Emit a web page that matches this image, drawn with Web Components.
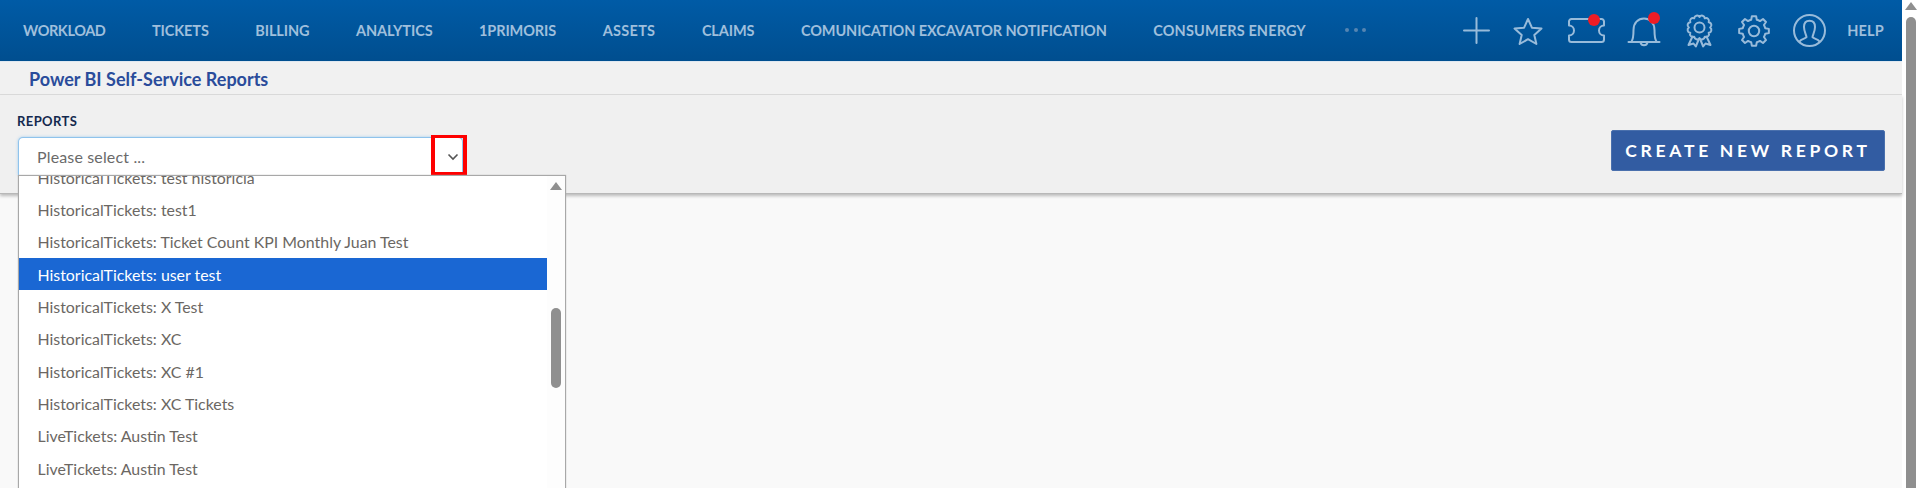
<!DOCTYPE html>
<html lang="en"><head><meta charset="utf-8"><title>Power BI Self-Service Reports</title>
<style>html,body{margin:0;height:488px;overflow:hidden;background:#f9f9f9;font-family:Lato,"Liberation Sans",sans-serif}</style>
</head><body>
<app-shell>
  <top-nav>
    <nav-item style="letter-spacing:-.4px">WORKLOAD</nav-item><nav-item>TICKETS</nav-item><nav-item>BILLING</nav-item><nav-item>ANALYTICS</nav-item><nav-item>1PRIMORIS</nav-item><nav-item style="letter-spacing:.3px">ASSETS</nav-item><nav-item>CLAIMS</nav-item><nav-item>COMUNICATION EXCAVATOR NOTIFICATION</nav-item><nav-item style="letter-spacing:.13px">CONSUMERS ENERGY</nav-item>
    <nav-icon slot="icons" name="plus" style="margin-left:0"></nav-icon>
    <nav-icon slot="icons" name="star" style="margin-left:24px"></nav-icon>
    <nav-icon slot="icons" name="ticket" dot style="margin-left:25px"></nav-icon>
    <nav-icon slot="icons" name="bell" dot style="margin-left:23px"></nav-icon>
    <nav-icon slot="icons" name="award" style="margin-left:27px"></nav-icon>
    <nav-icon slot="icons" name="gear" style="margin-left:26px"></nav-icon>
    <nav-icon slot="icons" name="user" style="margin-left:23px"></nav-icon>
    <nav-item slot="icons" style="margin-left:21px;letter-spacing:.2px">HELP</nav-item>
  </top-nav>
  <page-title>Power BI Self-Service Reports</page-title>
  <report-filter>
    <report-select label="REPORTS" placeholder="Please select ...">
      <list-option>HistoricalTickets: test historicia</list-option>
      <list-option>HistoricalTickets: test1</list-option>
      <list-option>HistoricalTickets: Ticket Count KPI Monthly Juan Test</list-option>
      <list-option selected>HistoricalTickets: user test</list-option>
      <list-option>HistoricalTickets: X Test</list-option>
      <list-option>HistoricalTickets: XC</list-option>
      <list-option>HistoricalTickets: XC #1</list-option>
      <list-option>HistoricalTickets: XC Tickets</list-option>
      <list-option>LiveTickets: Austin Test</list-option>
      <list-option>LiveTickets: Austin Test</list-option>
    </report-select>
    <primary-button slot="action">CREATE NEW REPORT</primary-button>
  </report-filter>
</app-shell>
<script>
function el(name, css, html){
  customElements.define(name, class extends HTMLElement{
    constructor(){super();this.attachShadow({mode:'open'}).innerHTML='<style>'+css+'</style>'+html;}
  });
}
function radial(n,r1,r2,c){
  let d='';
  for(let i=0;i<n;i++){
    const a=i/n*Math.PI*2, s=Math.PI/n;
    const p=(r,t)=>(c+r*Math.sin(t)).toFixed(2)+' '+(c-r*Math.cos(t)).toFixed(2);
    d+=(i?'L':'M')+p(r1,a-s*.62)+'L'+p(r2,a-s*.36)+'L'+p(r2,a+s*.36)+'L'+p(r1,a+s*.62)+'A'+r1+' '+r1+' 0 0 1 '+p(r1,a+s*1.38);
  }
  return d+'Z';
}
function scallop(n,r,bump,cx,cy){
  let d='';
  for(let i=0;i<n;i++){
    const p=t=>(cx+r*Math.sin(t)).toFixed(2)+' '+(cy-r*Math.cos(t)).toFixed(2);
    const a=i/n*Math.PI*2, b=(i+1)/n*Math.PI*2;
    d+=(i?'':'M'+p(a))+'A'+bump+' '+bump+' 0 0 1 '+p(b);
  }
  return d+'Z';
}
const ICONS={
  plus:[25,25,'<path d="M0 12.5H25M12.5 0V25"/>'],
  star:[30,28,'<path d="M15 2 18.9 10.7 28.5 11.6 21.3 18 23.4 27 15 22.2 6.6 27 8.7 18 1.5 11.6 11.1 10.7Z"/>'],
  ticket:[37,25,'<path d="M1 3.5A2.5 2.5 0 0 1 3.5 1H33.5A2.5 2.5 0 0 1 36 3.5V7.5A5 5 0 0 0 36 17.5V21.5A2.5 2.5 0 0 1 33.5 24H3.5A2.5 2.5 0 0 1 1 21.5V17.5A5 5 0 0 0 1 7.5Z"/>'],
  bell:[32,30,'<path d="M3.5 25.5C5.5 23 5.5 19 5.5 14 5.5 7 10 2.5 16 2.5S26.5 7 26.5 14C26.5 19 26.5 23 28.5 25.5"/><path d="M.5 26H31.5"/><path d="M12.5 26.5A3.6 3.6 0 0 0 19.5 26.5"/>'],
  award:[25,32,'<path d="'+scallop(12,10.6,2.9,12.5,12.5)+'"/><circle cx="12.5" cy="12.5" r="5"/><path d="M5.5 21.5 1.5 30 6.5 28.5 8.8 31.5 11.5 25"/><path d="M19.5 21.5 23.5 30 18.5 28.5 16.2 31.5 13.5 25"/>'],
  gear:[32,32,'<path d="'+radial(8,11.6,15,16)+'"/><circle cx="16" cy="16" r="5.2"/>'],
  user:[33,33,'<circle cx="16.5" cy="16.5" r="15.5"/><path d="M6.5 27.5C8 25 12.5 24.5 13.5 23.2 13.5 21 11 18 11 13 11 9 13 6.8 16.5 6.8S22 9 22 13C22 18 19.5 21 19.5 23.2 20.5 24.5 25 25 26.5 27.5"/>']
};
el('app-shell',`
  :host{display:grid;grid-template-columns:1fr 18px;height:488px;overflow:hidden;font-family:Lato,"Liberation Sans",sans-serif}
  main{display:flex;flex-direction:column;min-width:0;background:#f9f9f9}
`,`<main><slot></slot></main><page-scrollbar></page-scrollbar>`);
el('page-scrollbar',`
  :host{display:flex;flex-direction:column;align-items:center;background:#fff;padding:2px 0 0 0}
  .up{width:0;height:0;border:6px solid transparent;border-top:0;border-bottom:8px solid #8f8f8f}
  .thumb{flex:1;width:10px;margin-top:7px;background:#8f8f8f;border-radius:5px 5px 0 0}
`,`<div class="up"></div><div class="thumb"></div>`);
el('top-nav',`
  :host{display:flex;align-items:center;justify-content:space-between;height:61px;padding:0 18px 0 23px;background:linear-gradient(#005ba6,#004e8f);border-bottom:1px solid #dfe8f1;flex:none}
  .l{display:flex;align-items:center;gap:46.5px}
  .r{display:flex;align-items:center}
  .dots{display:flex;gap:4.5px;margin-left:-7px;margin-top:-1px}
  .dots i{width:4px;height:4px;border-radius:50%;background:#5585b2}
`,`<div class="l"><slot></slot><div class="dots"><i></i><i></i><i></i></div></div><div class="r"><slot name="icons"></slot></div>`);
el('nav-item',`
  :host{display:block;font:700 14.5px/18px Lato,"Liberation Sans",sans-serif;color:#9fbfdc;white-space:nowrap;letter-spacing:-.1px}
`,`<slot></slot>`);
customElements.define('nav-icon',class extends HTMLElement{
  constructor(){super();this.attachShadow({mode:'open'});}
  connectedCallback(){
    const [w,h,body]=ICONS[this.getAttribute('name')];
    const dot=this.hasAttribute('dot');
    this.shadowRoot.innerHTML=`<style>
      :host{display:block;position:relative;width:${w}px;height:${h}px}
      svg{display:block;fill:none;stroke:#98bbda;stroke-width:2;stroke-linejoin:round;stroke-linecap:round;overflow:visible}
      b{position:absolute;width:12px;height:12px;border-radius:50%;background:#ee1c25;top:-4px;right:${this.getAttribute('name')==='bell'?0:5}px}
    </style><svg width="${w}" height="${h}" viewBox="0 0 ${w} ${h}">${body}</svg>${dot?'<b></b>':''}`;
  }
});
el('page-title',`
  :host{display:flex;align-items:center;height:30px;padding:2px 0 0 29px;font:700 18px/20px Lato,"Liberation Sans",sans-serif;color:#2a4c9b;background:#f1f1f1;border-bottom:1px solid #dcdcdc;flex:none}
`,`<slot></slot>`);
el('report-filter',`
  :host{display:flex;justify-content:space-between;align-items:flex-start;height:99px;box-sizing:border-box;padding:18px 17px 0 18px;background:#f0f0f0;border-bottom:1px solid #b8b8b8;box-shadow:0 2px 3px rgba(0,0,0,.25);position:relative;flex:none}
  .a{padding-top:17px}
`,`<slot></slot><div class="a"><slot name="action"></slot></div>`);
customElements.define('report-select',class extends HTMLElement{
  constructor(){super();this.attachShadow({mode:'open'});}
  connectedCallback(){
    this.shadowRoot.innerHTML=`<style>
      :host{display:block;width:445px;position:relative}
      label{display:block;font:700 13px/16px Lato,"Liberation Sans",sans-serif;color:#14294f;margin:0 0 8px -1px;letter-spacing:.4px}
      .box{display:flex;align-items:center;justify-content:space-between;height:38px;box-sizing:border-box;padding:0 3.5px 0 18px;background:#fff;border:1px solid #8fc3ec;border-bottom:0;border-radius:5px 5px 0 0;box-shadow:0 0 3px rgba(90,170,235,.55);font:400 16px/20px Lato,"Liberation Sans",sans-serif;letter-spacing:.15px;color:#6a6a6a}
      svg{display:block;fill:none;stroke:#555;stroke-width:1.6}
      .mark{position:absolute;left:413px;top:22px;width:28px;height:34px;border:solid #fe0000;border-width:3px 4px}
      .list{position:absolute;left:0;top:62px;width:548px;height:320px;box-sizing:border-box;display:grid;grid-template-columns:1fr 18px;background:#fff;border:solid #a8a8a8;border-width:1px 1px 0 1px;overflow:hidden;z-index:2;box-shadow:0 0 1px #aaa}
      .rows{margin-top:-15px;min-width:0}
      .sb{display:flex;flex-direction:column;align-items:center;background:#fdfdfd;padding:6px 0 0 0}
      .up{width:0;height:0;border:6px solid transparent;border-top:0;border-bottom:8px solid #8f8f8f}
      .th{width:10px;height:80px;margin-top:118px;background:#8f8f8f;border-radius:5px}
    </style>
    <label>${this.getAttribute('label')}</label>
    <div class="box"><span>${this.getAttribute('placeholder')}</span><svg width="12" height="8" viewBox="0 0 12 8"><path d="M1.5 1.5 6 6l4.5-4.5"/></svg></div>
    <div class="mark"></div>
    <div class="list"><div class="rows"><slot></slot></div><div class="sb"><div class="up"></div><div class="th"></div></div></div>`;
  }
});
customElements.define('list-option',class extends HTMLElement{
  constructor(){super();this.attachShadow({mode:'open'}).innerHTML=`<style>
    :host{display:flex;align-items:center;height:32.33px;box-sizing:border-box;padding:1px 0 0 18.5px;font:400 15.9px/20px Lato,"Liberation Sans",sans-serif;color:#6b6763;white-space:nowrap}
    :host([selected]){background:#1a67d3;color:#fff}
  </style><slot></slot>`;}
});
el('primary-button',`
  :host{display:flex;align-items:center;justify-content:center;width:274px;height:41px;box-sizing:border-box;background:#325ca2;border:1px solid #4a70ad;border-radius:2px;color:#fff;font:700 17.5px/20px Lato,"Liberation Sans",sans-serif;letter-spacing:3.7px;white-space:nowrap}
`,`<slot></slot>`);
</script>
</body></html>
